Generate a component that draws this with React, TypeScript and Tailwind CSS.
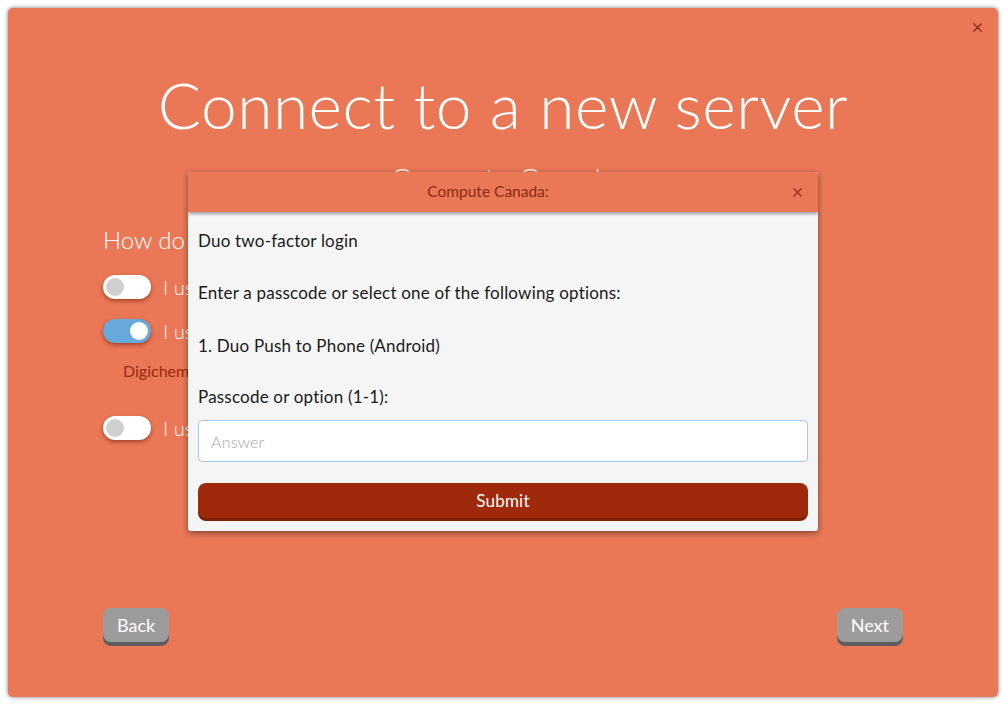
import { X } from 'lucide-react';

function Toggle({ on }: { on?: boolean }) {
  return (
    <div
      className={`w-[48px] h-[24px] rounded-full flex items-center px-[3px] shadow-[0_2px_4px_rgba(120,30,0,0.6)] ${
        on ? 'bg-[#67a9da] justify-end' : 'bg-white justify-start'
      }`}
    >
      <div
        className={`w-[18px] h-[18px] rounded-full ${on ? 'bg-white' : 'bg-[#cfcfcf]'}`}
      />
    </div>
  );
}

function NavButton({ label }: { label: string }) {
  return (
    <button className="h-[34px] px-[14px] rounded-[8px] bg-[#9c9c9c] text-white text-[18px] shadow-[0_4px_0_#5e5e5e]">
      {label}
    </button>
  );
}

export default function App() {
  return (
    <div
      className="relative w-[1006px] h-[705px] bg-white p-[8px]"
      style={{ fontFamily: 'Lato, "Noto Sans", sans-serif' }}
    >
      <div className="relative w-[990px] h-[689px] rounded-[5px] bg-[#ea7856] shadow-[0_0_4px_rgba(0,0,0,0.55)] flex flex-col px-[95px]">
        <button className="absolute right-[13px] top-[12px] text-[#8f2a10]">
          <X size={15} strokeWidth={2} />
        </button>
        <h1 className="mt-[58px] text-center text-white font-light text-[64px] leading-[78px] tracking-[0.5px]">
          Connect to a new server
        </h1>
        <div className="mt-[16px] text-center text-white font-light text-[30px] leading-[36px]">
          Compute Canada
        </div>
        <div className="mt-[29px] text-white font-light text-[24px] leading-[30px]">
          How do you connect to this server?
        </div>
        <div className="mt-[16px] flex flex-col">
          <div className="flex items-center gap-[12px] h-[32px]">
            <Toggle />
            <span className="text-white font-light text-[20px]">I use a password</span>
          </div>
          <div className="mt-[12px] flex items-center gap-[12px] h-[32px]">
            <Toggle on />
            <span className="text-white font-light text-[20px]">I use a key</span>
          </div>
          <div className="mt-[13px] ml-[20px] text-[#982a0c] text-[16px] leading-[22px]">
            Digichem will use your key
          </div>
          <div className="mt-[30px] flex items-center gap-[12px] h-[32px]">
            <Toggle />
            <span className="text-white font-light text-[20px]">I use two-factor</span>
          </div>
        </div>
        <div className="mt-auto mb-[55px] flex justify-between">
          <NavButton label="Back" />
          <NavButton label="Next" />
        </div>
      </div>

      <div className="absolute left-[188px] top-[172px] w-[630px] rounded-[3px] bg-[#f5f5f5] shadow-[0_2px_6px_rgba(0,0,0,0.45)] overflow-hidden">
        <div className="h-[40px] bg-[#ea7856] flex items-center pl-[10px] pr-[13px] shadow-[0_2px_3px_rgba(0,0,0,0.35)]">
          <span className="flex-1 mr-[12px] text-center text-[#8a2a10] text-[15.5px]">Compute Canada:</span>
          <X size={15} strokeWidth={1.8} className="text-[#8a2a10]" />
        </div>
        <div className="px-[10px] pt-[18px] pb-[13px] text-[#1a1a1a] text-[17px] tracking-[0.2px]">
          <div className="leading-[22px]">Duo two-factor login</div>
          <div className="mt-[30px] leading-[22px]">
            Enter a passcode or select one of the following options:
          </div>
          <div className="mt-[31px] leading-[22px]">1. Duo Push to Phone (Android)</div>
          <div className="mt-[29px] leading-[22px]">Passcode or option (1-1):</div>
          <input
            placeholder="Answer"
            className="mt-[12px] w-full h-[42px] rounded-[4px] border border-[#a9c6ee] bg-white px-[12px] text-[16px] font-light placeholder:text-[#a5a5a5] outline-none"
          />
          <button className="mt-[21px] w-full h-[35px] rounded-[8px] bg-[#9e2a0b] text-white text-[17px] shadow-[0_3px_0_#7f2007]">
            Submit
          </button>
        </div>
      </div>
    </div>
  );
}
